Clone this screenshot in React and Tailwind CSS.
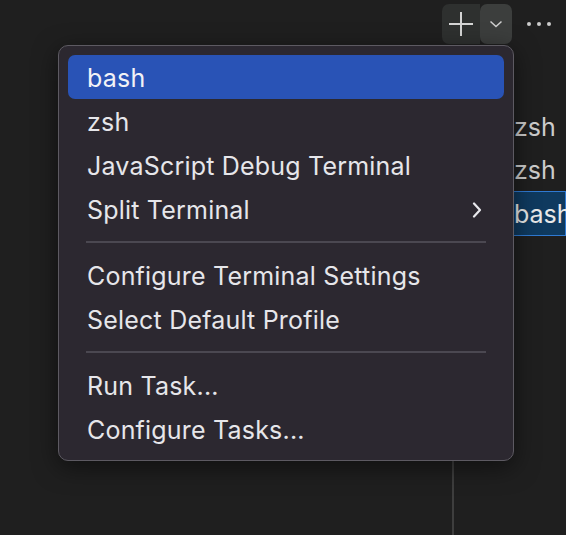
import React from "react";

const font = { fontFamily: "Inter, 'Noto Sans', sans-serif" };

function Row({ children, selected, chevron }) {
  return (
    <div
      className={`flex h-[44px] items-center justify-between rounded-[7px] pl-[19px] pr-[22px] pt-[2px] text-[25px] leading-none tracking-[0.2px] ${
        selected ? "bg-[#2953b6] text-[#f2f2f6]" : "text-[#e6e6ea]"
      }`}
    >
      <span>{children}</span>
      {chevron && (
        <svg width="10" height="16" viewBox="0 0 10 16" fill="none">
          <path d="M2 1.5 L8 8 L2 14.5" stroke="#e8e8ec" strokeWidth="2.2" strokeLinecap="round" strokeLinejoin="round" />
        </svg>
      )}
    </div>
  );
}

function Sep() {
  return (
    <div className="flex h-[22px] items-center px-[18px]">
      <div className="h-[2px] w-full bg-[#4b4851]" />
    </div>
  );
}

export default function App() {
  return (
    <div className="relative h-[535px] w-[566px] overflow-hidden bg-[#1f1f1f]" style={font}>
      {/* toolbar */}
      <div className="flex h-[48px] items-start justify-end pt-[4px]">
        <div className="flex h-[40px] w-[38px] items-center justify-center rounded-l-[7px] bg-[#2e302f]">
          <svg width="26" height="26" viewBox="0 0 26 26">
            <path d="M13 1 V25 M1 13 H25" stroke="#d4d4d4" strokeWidth="2" />
          </svg>
        </div>
        <div className="flex h-[40px] w-[32px] items-center justify-center rounded-[7px] bg-[#3c3e3d]">
          <svg width="14" height="10" viewBox="0 0 14 10" fill="none">
            <path d="M1.5 2.5 L7 7.5 L12.5 2.5" stroke="#cfcfcf" strokeWidth="1.5" />
          </svg>
        </div>
        <div className="flex h-[40px] w-[54px] items-center justify-center gap-[6px]">
          <span className="h-[4px] w-[4px] rounded-full bg-[#cccccc]" />
          <span className="h-[4px] w-[4px] rounded-full bg-[#cccccc]" />
          <span className="h-[4px] w-[4px] rounded-full bg-[#cccccc]" />
        </div>
      </div>
      {/* content */}
      <div className="flex h-[487px]">
        <div className="w-[452px] shrink-0" />
        <div className="min-w-0 flex-1 overflow-hidden whitespace-nowrap border-l-2 border-[#3e3e3e] pt-[57px]">
          <div className="flex h-[43px] items-center pl-[60px] pt-[2px] text-[25px] text-[#cccccc]">zsh</div>
          <div className="flex h-[43px] items-center pl-[60px] pt-[2px] text-[25px] text-[#cccccc]">zsh</div>
          <div className="flex h-[45px] items-center border border-[#2f7ad2] bg-[#0f3a5f] pl-[59px] pt-[2px] text-[25px] text-[#e8e8e8]">
            bash
          </div>
        </div>
      </div>
      {/* dropdown menu */}
      <div className="absolute left-[58px] top-[45px] w-[456px] rounded-[10px] border border-[#5d5a62] bg-[#2c2830] p-[9px] shadow-[0_6px_24px_rgba(0,0,0,0.5)]">
        <Row selected>bash</Row>
        <Row>zsh</Row>
        <Row>JavaScript Debug Terminal</Row>
        <Row chevron>Split Terminal</Row>
        <Sep />
        <Row>Configure Terminal Settings</Row>
        <Row>Select Default Profile</Row>
        <Sep />
        <Row>Run Task...</Row>
        <Row>Configure Tasks...</Row>
      </div>
    </div>
  );
}
